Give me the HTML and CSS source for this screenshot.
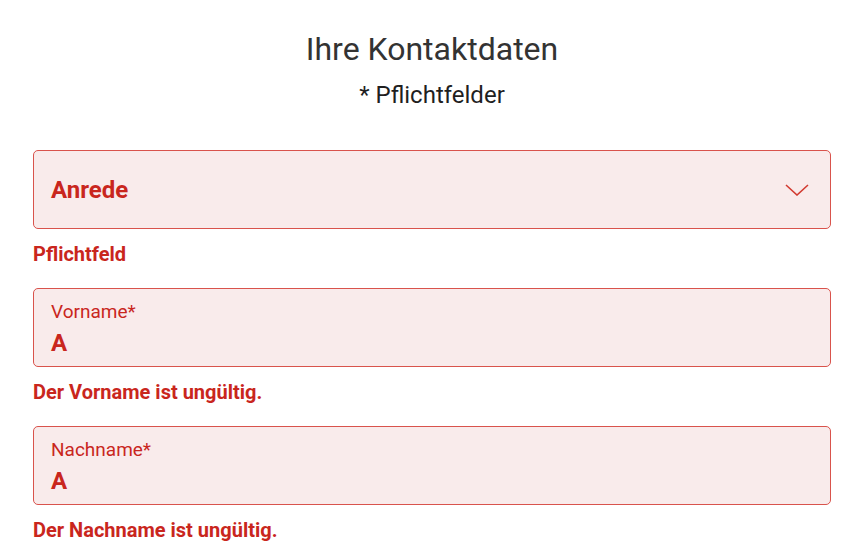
FILE: index.html
```html
<!DOCTYPE html>
<html lang="de">
<head>
  <meta charset="UTF-8">
  <title>Ihre Kontaktdaten</title>
  <link rel="stylesheet" href="styles.css">
</head>
<body>

  <section class="kontakt">
    <header class="kontakt-kopf">
      <h2 class="kontakt-titel">Ihre Kontaktdaten</h2>
      <p class="kontakt-hinweis">* Pflichtfelder</p>
    </header>

    <!-- Anrede (Auswahl) -->
    <div class="feld">
      <div class="feld-box feld-auswahl">
        <span class="auswahl-text">Anrede</span>
        <svg class="auswahl-pfeil" width="24" height="12" viewBox="0 0 24 12">
          <path d="M1 1 L12 11 L23 1" fill="none" stroke="currentColor" stroke-width="1.6"/>
        </svg>
      </div>
      <p class="feld-fehler">Pflichtfeld</p>
    </div>

    <!-- Vorname -->
    <div class="feld">
      <div class="feld-box">
        <span class="feld-label">Vorname*</span>
        <span class="feld-wert">A</span>
      </div>
      <p class="feld-fehler">Der Vorname ist ungültig.</p>
    </div>

    <!-- Nachname -->
    <div class="feld">
      <div class="feld-box">
        <span class="feld-label">Nachname*</span>
        <span class="feld-wert">A</span>
      </div>
      <p class="feld-fehler">Der Nachname ist ungültig.</p>
    </div>
  </section>

</body>
</html>
```

FILE: styles.css
```css
body {
  margin: 0;
  padding: 0;
  background-color: #fff;
  font-family: Roboto, "Liberation Sans", sans-serif;
  color: #262626;
}

.kontakt {
  padding: 29px 32px 0 33px;
}

.kontakt-kopf {
  text-align: center;
  margin-bottom: 40px;
}

.kontakt-titel {
  margin: 0;
  font-size: 32px;
  font-weight: 400;
  line-height: 40px;
  color: #333;
}

.kontakt-hinweis {
  margin: 11px 0 0;
  font-size: 24px;
  line-height: 30px;
  color: #1f1f1f;
}

.feld {
  margin-bottom: 22px;
}

.feld-box {
  box-sizing: border-box;
  height: 79px;
  border: 1.5px solid #d9534c;
  border-radius: 5px;
  background-color: #f9ebeb;
  padding: 12px 17px 0;
  display: flex;
  flex-direction: column;
  color: #c9261d;
}

.feld-auswahl {
  flex-direction: row;
  align-items: center;
  justify-content: space-between;
  padding: 0 21px 0 17px;
}

.auswahl-text {
  font-size: 24px;
  font-weight: 700;
}

.auswahl-pfeil {
  color: #d23a30;
}

.feld-label {
  font-size: 19px;
  line-height: 22px;
}

.feld-wert {
  font-size: 24px;
  font-weight: 700;
  line-height: 28px;
  margin-top: 6px;
}

.feld-fehler {
  margin: 13px 0 0;
  font-size: 20px;
  font-weight: 700;
  line-height: 24px;
  color: #c9261d;
}
```
